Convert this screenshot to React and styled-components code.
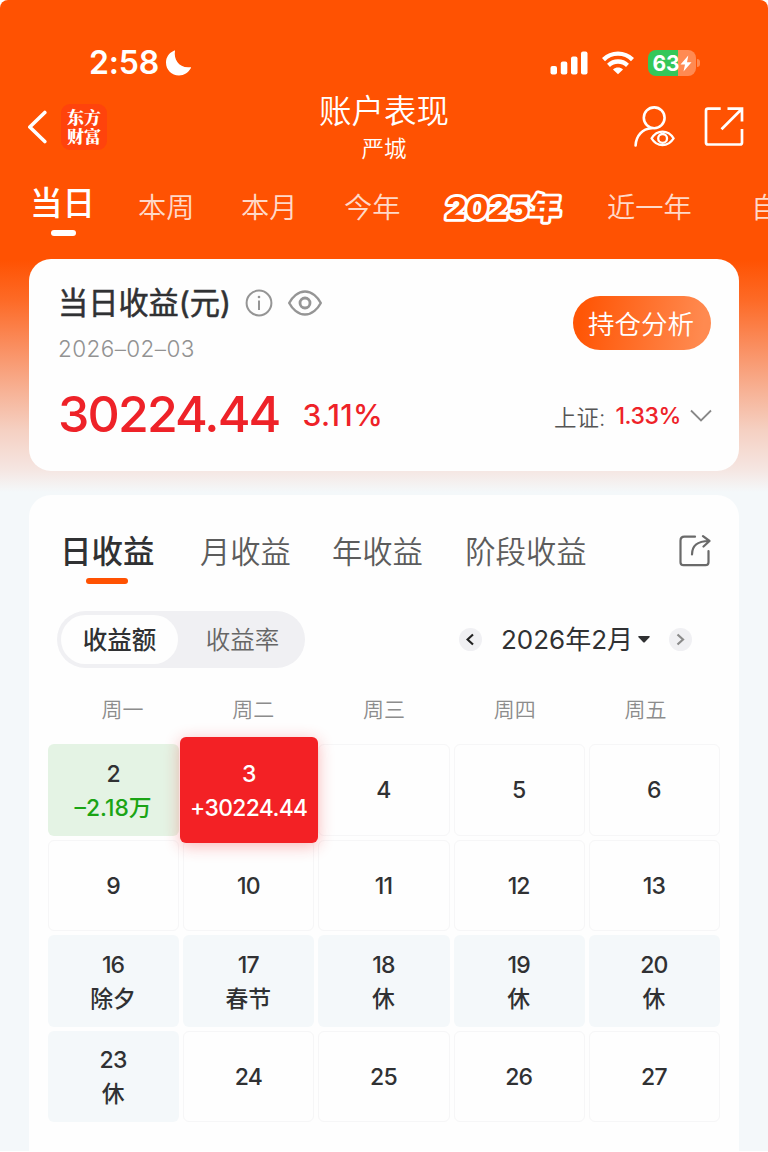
import React from "react";
import styled, { createGlobalStyle, css } from "styled-components";

const Global = createGlobalStyle`
  * { box-sizing: border-box; }
  body {
    margin: 0;
    background: #fff;
    font-family: Inter, "Noto Sans CJK SC", sans-serif;
    color: #303133;
    -webkit-font-smoothing: antialiased;
  }
`;

const Page = styled.div`
  width: 768px;
  height: 1151px;
  overflow: hidden;
  border-radius: 8px 8px 0 0;
  background: linear-gradient(
    #ff5202 0, #ff5202 260px, #fd6a26 300px, #fa8d5e 345px,
    #f7b194 390px, #f5d0c2 430px, #f5e6e2 470px, #f4f8fa 492px
  );
`;

const StatusBar = styled.div`
  display: flex;
  align-items: center;
  height: 90px;
  padding: 36px 68px 0 89px;
  color: #fff;
`;

const Time = styled.span`
  font-size: 32px;
  font-weight: 600;
  line-height: 54px;
  letter-spacing: -0.2px;
  margin-right: 6px;
`;

const StatusIcons = styled.div`
  display: flex;
  align-items: center;
  margin-left: auto;
`;

const Battery = styled.div`
  display: flex;
  align-items: center;
  justify-content: center;
  width: 48px;
  height: 26px;
  margin-left: 14px;
  border-radius: 8px;
  background: linear-gradient(90deg, #34c759 0 62%, #ff8a52 62%);
  font-size: 21px;
  font-weight: 700;
  letter-spacing: 0;
`;

const BatteryTip = styled.i`
  width: 3px;
  height: 8px;
  margin-left: 1px;
  border-radius: 0 4px 4px 0;
  background: #ff8a52;
`;

const NavBar = styled.header`
  display: grid;
  grid-template-columns: 1fr auto 1fr;
  height: 82px;
  padding: 0 24px;
  color: #fff;
`;

const NavSide = styled.div`
  display: flex;
  align-items: center;
  gap: ${(p) => (p.$end ? 28 : 14)}px;
  justify-content: ${(p) => (p.$end ? "flex-end" : "flex-start")};
  height: 74px;
  padding-left: 3px;
`;

const Logo = styled.div`
  width: 46px;
  height: 46px;
  padding-top: 3px;
  border-radius: 9px;
  background: #ff430c;
  font: 900 17px/19px "Noto Serif CJK SC", "Noto Sans CJK SC", sans-serif;
  text-align: center;
`;

const Heading = styled.div`
  padding-top: 2px;
  text-align: center;
  h1 {
    margin: 0;
    font-size: 32.5px;
    font-weight: 350;
    line-height: 40px;
  }
  p {
    margin: 1px 0 0;
    font-size: 22.5px;
    font-weight: 350;
    line-height: 32px;
  }
`;

const PeriodTabs = styled.nav`
  display: flex;
  height: 87px;
  padding-left: 30px;
  white-space: nowrap;
`;

const PeriodTab = styled.div`
  flex: none;
  width: ${(p) => p.$w}px;
  padding-top: 15px;
  font-size: 28.3px;
  font-weight: 350;
  line-height: 42px;
  color: #ffd9c8;
  svg { display: block; overflow: visible; }
  ${(p) => p.$active && css`
    padding-top: 11px;
    font-size: 32.5px;
    font-weight: 500;
    color: #fff;
    &::after {
      content: "";
      display: block;
      width: 25px;
      height: 6px;
      margin: 5px 0 0 21px;
      border-radius: 3px;
      background: #fff;
    }
  `}
`;

const YearText = styled.text`
  font-size: 30px;
  font-weight: 800;
  fill: #ff5202;
  stroke: #fff;
  stroke-width: 5.6px;
  stroke-linejoin: round;
  paint-order: stroke;
`;

const Card = styled.section`
  width: 710px;
  margin: 0 auto;
  border-radius: 22px;
  background: #fefefe;
`;

const Summary = styled(Card)`
  height: 212px;
  padding: 24px 28px 0 29px;
`;

const SummaryTop = styled.div`
  display: flex;
  justify-content: space-between;
`;

const SummaryTitle = styled.div`
  display: flex;
  align-items: center;
  height: 40px;
  font-size: 30.2px;
  font-weight: 400;
  line-height: 40px;
  white-space: nowrap;
  -webkit-text-stroke: 0.5px currentColor;
  span { margin: 0 14px 0 0; }
  svg + svg { margin-left: 14px; }
`;

const DateText = styled.div`
  margin-top: 10px;
  font-size: 22.5px;
  font-weight: 300;
  line-height: 32px;
  letter-spacing: 0.4px;
  color: #929292;
`;

const AnalysisButton = styled.button`
  width: 138px;
  height: 54px;
  margin-top: 13px;
  padding: 0 2px 1px 0;
  border: 0;
  border-radius: 27px;
  background: linear-gradient(100deg, #ff5606 8%, #ff8a50 92%);
  color: #fff;
  font: 350 26.5px/53px "Noto Sans CJK SC", sans-serif;
`;

const SummaryBottom = styled.div`
  display: flex;
  align-items: center;
  height: 60px;
  margin-top: 19px;
  color: #ee2228;
`;

const Profit = styled.strong`
  font-size: 50px;
  font-weight: 500;
  letter-spacing: -1.85px;
`;

const Rate = styled.span`
  margin: 2px auto 0 23px;
  font-size: 30px;
  font-weight: 500;
  letter-spacing: 0.2px;
`;

const Index = styled.div`
  display: flex;
  align-items: center;
  margin: 4px -1px 0 0;
  font-size: 22.5px;
  font-weight: 350;
  color: #555;
  b {
    margin: 0 9px 0 10px;
    font-size: 23px;
    font-weight: 500;
    letter-spacing: -0.4px;
    color: #ee2228;
  }
`;

const Detail = styled(Card)`
  height: 656px;
  margin-top: 24px;
  padding: 35px 19px 0;
  border-radius: 22px 22px 0 0;
`;

const ReportTabs = styled.nav`
  display: flex;
  align-items: flex-start;
  height: 81px;
  padding: 0 9px 0 12px;
  svg { margin: 4px 0 0 auto; }
`;

const ReportTab = styled.div`
  margin-right: ${(p) => p.$gap}px;
  font-size: 30.3px;
  font-weight: 350;
  line-height: 44px;
  color: #5c5c5c;
  ${(p) => p.$active && css`
    font-size: 31.5px;
    font-weight: 500;
    color: #303133;
    &::after {
      content: "";
      display: block;
      width: 42px;
      height: 6px;
      margin: 4px auto 0;
      border-radius: 3px;
      background: #ff5202;
    }
  `}
`;

const Controls = styled.div`
  display: flex;
  align-items: center;
  height: 57px;
  padding: 0 28px 0 9px;
`;

const Segmented = styled.div`
  display: flex;
  gap: 2px;
  width: 248px;
  height: 57px;
  padding: 4px 0 4px 4px;
  border-radius: 29px;
  background: #f0f0f3;
`;

const Segment = styled.div`
  width: ${(p) => (p.$active ? 117 : 125)}px;
  border-radius: 25px;
  background: ${(p) => (p.$active ? "#fefefe" : "transparent")};
  color: ${(p) => (p.$active ? "#303133" : "#666")};
  font-size: 24.5px;
  font-weight: ${(p) => (p.$active ? 500 : 350)};
  line-height: 51px;
  text-align: center;
`;

const MonthPicker = styled.div`
  display: flex;
  align-items: center;
  margin-left: auto;
  font-size: 26px;
  white-space: nowrap;
`;

const RoundButton = styled.i`
  display: grid;
  place-items: center;
  width: 23px;
  height: 23px;
  border-radius: 50%;
  background: #f0f0f3;
`;

const Month = styled.span`
  margin: 1px 5px 0 19px;
  line-height: 40px;
`;

const CaretSlot = styled.span`
  display: flex;
  margin-right: 19px;
`;

const Weekdays = styled.div`
  display: grid;
  grid-template-columns: repeat(5, 1fr);
  margin: 25px 9px 0;
  font-size: 21px;
  font-weight: 350;
  line-height: 34px;
  color: #8c8c8c;
  text-align: center;
`;

const Calendar = styled.div`
  display: grid;
  grid-template-columns: repeat(5, 1fr);
  grid-auto-rows: 91.5px;
  gap: 4px;
  margin-top: 17px;
`;

const tones = {
  plain: css`border: 1.5px solid #f6f6f7;`,
  rest: css`background: #f4f8fa;`,
  loss: css`background: #e4f3e4;`,
  selected: css`
    z-index: 1;
    margin: -7px -4px -7.5px -3px;
    border-radius: 6px;
    background: #f32125;
    color: #fff;
    box-shadow: 0 3px 16px rgba(243, 33, 37, 0.32);
  `,
};

const Day = styled.div`
  display: flex;
  flex-direction: column;
  align-items: center;
  justify-content: center;
  padding: 2px 1px 0 0;
  border-radius: 6px;
  font-size: 23px;
  font-weight: 500;
  line-height: 33px;
  letter-spacing: -0.8px;
  ${(p) => tones[p.$tone]}
`;

const DayNote = styled.span`
  font-size: 22.8px;
  letter-spacing: ${(p) => (p.$tone === "selected" ? -0.6 : 0)}px;
  white-space: nowrap;
  color: ${(p) => (p.$tone === "loss" ? "#1ba415" : "inherit")};
`;

const MoonIcon = () => (
  <svg width="27" height="27" viewBox="0 0 27 27" fill="#fff">
    <path d="M10 .8C8.500 9.500 14 18.500 25.300 17.200C26 17.100 26.300 17.600 25.800 18.300C23.200 22.800 19.200 25.500 14 25.500C6.500 25.500 1 20 1 12.600C1 7.300 3.900 2.900 8.900.7C9.500.4 10.100.2 10 .8Z" />
  </svg>
);

const SignalIcon = () => (
  <svg width="38" height="24" viewBox="0 0 38 24" fill="#fff">
    <rect x="0.500" y="15" width="6.500" height="8.500" rx="2" />
    <rect x="10.800" y="10.500" width="6.500" height="13" rx="2" />
    <rect x="21" y="5.500" width="6.500" height="18" rx="2" />
    <rect x="31" y="0.500" width="6.500" height="23" rx="2" />
  </svg>
);

const WifiSvg = styled.svg`
  margin-left: 14px;
`;

const WifiIcon = () => (
  <WifiSvg width="32" height="24" viewBox="0 0 32 24" fill="none" stroke="#fff" strokeWidth="4.300">
    <path d="M1.500 8.600C9.500.7 22.500.7 30.500 8.600" />
    <path d="M6.500 14.300C12 9.200 20 9.200 25.500 14.300" />
    <path d="M16 23.300L11 18.400C14 15.900 18 15.900 21 18.400Z" fill="#fff" stroke="none" />
  </WifiSvg>
);

const BoltIcon = () => (
  <svg width="12" height="17" viewBox="0 0 12 17" fill="#fff">
    <path d="M8.300.5L.5 9.500H5L3.500 16.500L11.500 7.300H7Z" />
  </svg>
);

const BackIcon = () => (
  <svg width="20" height="34" viewBox="0 0 20 34" fill="none" stroke="#fff" strokeWidth="3.600" strokeLinecap="round" strokeLinejoin="round">
    <path d="M17.800 2.500L2.800 17L17.800 31.500" />
  </svg>
);

const UserEyeIcon = () => (
  <svg width="42" height="42" viewBox="0 0 42 42" fill="none" stroke="#fff" strokeWidth="2.600" strokeLinecap="round">
    <circle cx="20.200" cy="11.800" r="10.400" />
    <path d="M1.600 39.500C2 30 8.500 22.500 17.500 22.200" />
    <path d="M17.600 32.400C23 23.400 34 23.400 39.600 32.400C34 41.400 23 41.400 17.600 32.400Z" strokeWidth="2.200" />
    <circle cx="28.600" cy="32.400" r="4.400" strokeWidth="2.300" />
  </svg>
);

const OpenIcon = () => (
  <svg width="40" height="40" viewBox="0 0 40 40" fill="none" stroke="#fff" strokeWidth="2.700">
    <path d="M16.700 1.700H4Q2 1.700 2 3.700V35.500Q2 37.500 4 37.500H36Q38 37.500 38 35.500V22M23.500 1.700H38V14.500M38 1.700L17.500 22.300" />
  </svg>
);

const InfoIcon = () => (
  <svg width="28" height="28" viewBox="0 0 28 28" fill="none" stroke="#959595" strokeWidth="2">
    <circle cx="14" cy="14" r="12.400" />
    <path d="M14 11.500V21" />
    <circle cx="14" cy="8" r="1.300" fill="#959595" stroke="none" />
  </svg>
);

const EyeIcon = () => (
  <svg width="36" height="28" viewBox="0 0 36 28" fill="none" stroke="#959595" strokeWidth="2.400" strokeLinejoin="round">
    <path d="M2.200 14C5 8.500 11 2.500 18 2.500S31 8.500 33.800 14C31 19.500 25 25.500 18 25.500S5 19.500 2.200 14Z" />
    <circle cx="18" cy="14" r="5" strokeWidth="2.800" />
  </svg>
);

const ChevronDown = () => (
  <svg width="22" height="14" viewBox="0 0 22 14" fill="none" stroke="#888" strokeWidth="1.800">
    <path d="M1 1.500L11 11.500L21 1.500" />
  </svg>
);

const ShareIcon = () => (
  <svg width="32" height="34" viewBox="0 0 32 34" fill="none" stroke="#6a6a6a" strokeWidth="2.200" strokeLinecap="round" strokeLinejoin="round">
    <path d="M16 2.700H5.500Q1.500 2.700 1.500 6.700V28.200Q1.500 31.200 4.500 31.200H26.500Q29.500 31.200 29.500 28.200V17" />
    <path d="M13 20.500C13 12 18 7 30 7M24 2.200L30.500 7L24.500 12.500" />
  </svg>
);

const Arrow = ({ right }) => (
  <svg width="9" height="13" viewBox="0 0 9 13" fill="none" stroke={right ? "#8b8b8b" : "#222"} strokeWidth="2.200">
    <path d={right ? "M1.500 1.500L7 6.500L1.500 11.500" : "M7 1.500L1.500 6.500L7 11.500"} />
  </svg>
);

const Caret = () => (
  <svg width="12" height="7" viewBox="0 0 12 7" fill="#303133">
    <path d="M1 0H11Q12.300.3 11.500 1.300L7 6Q6 7 5 6L.5 1.300Q-.3.3 1 0Z" />
  </svg>
);

const YearBadge = () => (
  <svg width="120" height="42" viewBox="0 0 120 42">
    <g transform="translate(0 31.500) skewX(-5)">
      <YearText x="0" y="0" textLength="115" lengthAdjust="spacingAndGlyphs">2025年</YearText>
    </g>
  </svg>
);

const periods = [
  { label: "当日", w: 108, active: true },
  { label: "本周", w: 103 },
  { label: "本月", w: 103 },
  { label: "今年", w: 101 },
  { label: "2025年", w: 162, badge: true },
  { label: "近一年", w: 144 },
  { label: "自定义", w: 90 },
];

const reports = [
  { label: "日收益", gap: 45.5, active: true },
  { label: "月收益", gap: 41 },
  { label: "年收益", gap: 42.5 },
  { label: "阶段收益", gap: 0 },
];

const days = [
  [2, "loss", "–2.18万"], [3, "selected", "+30224.44"], [4], [5], [6],
  [9], [10], [11], [12], [13],
  [16, "rest", "除夕"], [17, "rest", "春节"], [18, "rest", "休"], [19, "rest", "休"], [20, "rest", "休"],
  [23, "rest", "休"], [24], [25], [26], [27],
];

export default function App() {
  return (
    <Page>
      <Global />
      <StatusBar>
        <Time>2:58</Time>
        <MoonIcon />
        <StatusIcons>
          <SignalIcon />
          <WifiIcon />
          <Battery>63<BoltIcon /></Battery>
          <BatteryTip />
        </StatusIcons>
      </StatusBar>
      <NavBar>
        <NavSide>
          <BackIcon />
          <Logo>东方<br />财富</Logo>
        </NavSide>
        <Heading>
          <h1>账户表现</h1>
          <p>严城</p>
        </Heading>
        <NavSide $end>
          <UserEyeIcon />
          <OpenIcon />
        </NavSide>
      </NavBar>
      <PeriodTabs>
        {periods.map((t) => (
          <PeriodTab key={t.label} $w={t.w} $active={t.active}>
            {t.badge ? <YearBadge /> : t.label}
          </PeriodTab>
        ))}
      </PeriodTabs>
      <Summary>
        <SummaryTop>
          <div>
            <SummaryTitle>
              <span>当日收益(元)</span>
              <InfoIcon />
              <EyeIcon />
            </SummaryTitle>
            <DateText>2026–02–03</DateText>
          </div>
          <AnalysisButton>持仓分析</AnalysisButton>
        </SummaryTop>
        <SummaryBottom>
          <Profit>30224.44</Profit>
          <Rate>3.11%</Rate>
          <Index>上证:<b>1.33%</b><ChevronDown /></Index>
        </SummaryBottom>
      </Summary>
      <Detail>
        <ReportTabs>
          {reports.map((t) => (
            <ReportTab key={t.label} $gap={t.gap} $active={t.active}>{t.label}</ReportTab>
          ))}
          <ShareIcon />
        </ReportTabs>
        <Controls>
          <Segmented>
            <Segment $active>收益额</Segment>
            <Segment>收益率</Segment>
          </Segmented>
          <MonthPicker>
            <RoundButton><Arrow /></RoundButton>
            <Month>2026年2月</Month>
            <CaretSlot><Caret /></CaretSlot>
            <RoundButton><Arrow right /></RoundButton>
          </MonthPicker>
        </Controls>
        <Weekdays>
          {["周一", "周二", "周三", "周四", "周五"].map((d) => <span key={d}>{d}</span>)}
        </Weekdays>
        <Calendar>
          {days.map(([day, tone = "plain", note]) => (
            <Day key={day} $tone={tone}>
              {day}
              {note && <DayNote $tone={tone}>{note}</DayNote>}
            </Day>
          ))}
        </Calendar>
      </Detail>
    </Page>
  );
}
